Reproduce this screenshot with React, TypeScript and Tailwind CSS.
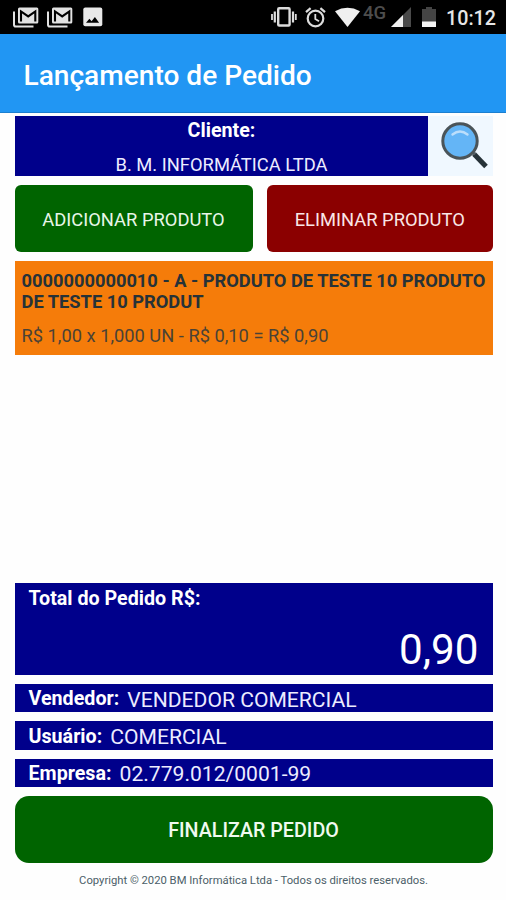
const INFO_ROWS = [
  { label: 'Vendedor:', value: 'VENDEDOR COMERCIAL' },
  { label: 'Usuário:', value: 'COMERCIAL' },
  { label: 'Empresa:', value: '02.779.012/0001-99' },
];

function MailIcon() {
  return (
    <svg width="26" height="21" viewBox="0 0 26 21" fill="none">
      <path d="M1 4.5v13.2q0 1.8 1.8 1.8H20.5" stroke="#e2e2e2" strokeWidth="2" />
      <rect x="5" y="0.5" width="20.3" height="16" rx="1.5" fill="#e2e2e2" />
      <path d="M8 14.6V4.4l7.2 5 7.1-5v10.2" stroke="#000" strokeWidth="2.1" />
    </svg>
  );
}

function PictureIcon() {
  return (
    <svg width="20" height="20" viewBox="0 0 20 20">
      <rect x="0.3" y="0.5" width="19" height="18.7" rx="2" fill="#e8e8e8" />
      <path d="M3 15.8l3.4-4 2.2 2.4 3.3-4.2 4.2 5.8z" fill="#000" />
    </svg>
  );
}

function VibrateIcon() {
  return (
    <svg width="26" height="20" viewBox="0 0 26 20" fill="none" stroke="#dcdcdc">
      <rect x="7.2" y="1.2" width="11.4" height="17.3" rx="1" strokeWidth="2.4" />
      <path d="M3.8 4.5v11M22 4.5v11" strokeWidth="2.2" />
      <path d="M1 7v6M24.8 7v6" strokeWidth="1.8" />
    </svg>
  );
}

function AlarmIcon() {
  return (
    <svg width="21" height="21" viewBox="0 0 21 21" fill="none" stroke="#dcdcdc" strokeWidth="2.2">
      <circle cx="10.5" cy="11.5" r="7.8" />
      <path d="M10.3 7v5l3.7 2.3" strokeWidth="1.8" />
      <path d="M1 5.2l4.6-4M20 5.2l-4.6-4" />
    </svg>
  );
}

function StatusBar() {
  return (
    <div className="flex h-[34px] items-start bg-black pt-[7px]">
      <div className="flex pl-[13px]">
        <MailIcon />
        <div className="ml-2"><MailIcon /></div>
        <div className="ml-[10px]"><PictureIcon /></div>
      </div>
      <div className="ml-auto flex pr-[10px]">
        <div className="-ml-px"><VibrateIcon /></div>
        <div className="ml-2"><AlarmIcon /></div>
        <svg className="ml-[9px]" width="25" height="20" viewBox="0 0 25 20">
          <path d="M0 4.2Q12.5-2.6 25 4.2L12.5 20z" fill="#f0f0f0" />
        </svg>
        <span className="-mt-[3px] ml-[3px] w-[26px] text-[18.5px] font-medium leading-[18px] text-[#4d4d4d]">4G</span>
        <svg className="ml-[2px]" width="20" height="20" viewBox="0 0 20 20">
          <path d="M20 0v20H0z" fill="#4a4a4a" />
          <path d="M12 8v12H0z" fill="#f0f0f0" />
        </svg>
        <svg className="-mt-px ml-[11px]" width="14" height="21" viewBox="0 0 14 21">
          <path d="M4 1h6v2h4v18H0V3h4z" fill="#444" />
          <path d="M0 15.5h14V21H0z" fill="#f4f4f4" />
        </svg>
        <span className="ml-[10px] mt-px w-[50px] text-[19.7px] font-medium leading-[22px] text-[#e6e6e6]">10:12</span>
      </div>
    </div>
  );
}

function SearchIcon() {
  return (
    <svg width="65" height="60" viewBox="0 0 65 60">
      <path d="M46 38l12 12.5" stroke="#263238" strokeWidth="5" />
      <path d="M42 33.5l5 5" stroke="#555f66" strokeWidth="3" />
      <circle cx="32" cy="25" r="17.2" fill="#64b5f6" stroke="#4a5459" strokeWidth="3" />
      <path d="M24.5 18.5q7.5-6 15 0" fill="none" stroke="#bbdefb" strokeWidth="2.4" strokeLinecap="round" />
    </svg>
  );
}

export default function App() {
  return (
    <div className="flex h-[900px] w-[506px] flex-col overflow-hidden bg-[#fefefe] font-['Roboto',sans-serif]">
      <StatusBar />
      <header className="flex h-[79px] items-center border-b border-[#1b7fd0] bg-[#2196f3] pl-[23.5px] pt-[6px]">
        <h1 className="text-[28.1px] font-medium text-white">Lançamento de Pedido</h1>
      </header>

      <main className="flex flex-1 flex-col pl-[14.5px] pr-[13.5px] pt-[3px]">
        <div className="flex h-[60px]">
          <div className="flex-1 bg-[#00008b] pl-px text-center text-white">
            <div className="mt-[3px] text-[19.7px] font-bold leading-[23px]">Cliente:</div>
            <div className="mt-[11px] text-[18.35px] leading-[23px] text-[#ececff]">B. M. INFORMÁTICA LTDA</div>
          </div>
          <button className="w-[65px] bg-[#f0f8ff]"><SearchIcon /></button>
        </div>

        <div className="mt-[9px] flex h-[67px] gap-[14.5px] text-[18.35px]">
          <button className="w-[238px] rounded-[6px] bg-[#006400] pt-[2px] text-[#e8f6e8]">ADICIONAR PRODUTO</button>
          <button className="flex-1 rounded-[6px] bg-[#8b0000] pt-[2px] text-[#fae6e6]">ELIMINAR PRODUTO</button>
        </div>

        <div className="mt-[9px] h-[94px] bg-[#f57c0a] pl-[7px] pt-[9px] text-[18.3px]">
          <p className="whitespace-nowrap font-bold leading-[21px] text-[#263238]">
            0000000000010 - A - PRODUTO DE TESTE 10 PRODUTO
            <br />
            DE TESTE 10 PRODUT
          </p>
          <p className="mt-[12px] leading-[23px] text-[#4a4236]">R$ 1,00 x 1,000 UN - R$ 0,10 = R$ 0,90</p>
        </div>

        <div className="mt-auto flex h-[92px] flex-col bg-[#00008b] px-[14px] text-white">
          <span className="mt-[4px] text-[19.7px] font-bold leading-[23px]">Total do Pedido R$:</span>
          <span className="mt-[16px] self-end text-[42.2px] leading-[48px]">0,90</span>
        </div>

        {INFO_ROWS.map((row) => (
          <div key={row.label} className="mt-[9px] flex h-[28.4px] shrink-0 items-center gap-[8px] bg-[#00008b] pl-[14px]">
            <span className="pt-[2px] text-[19.7px] font-bold text-white">{row.label}</span>
            <span className="pt-[3px] text-[21.1px] text-[#ececff]">{row.value}</span>
          </div>
        ))}

        <button className="mt-[9px] h-[67px] shrink-0 rounded-[14px] bg-[#006400] pt-[3px] text-[19.7px] font-medium text-[#f0faf0]">
          FINALIZAR PEDIDO
        </button>
        <p className="mb-[12px] mt-[10px] text-center text-[11.25px] leading-[15px] text-[#4c5f69]">
          Copyright © 2020 BM Informática Ltda - Todos os direitos reservados.
        </p>
      </main>
    </div>
  );
}
